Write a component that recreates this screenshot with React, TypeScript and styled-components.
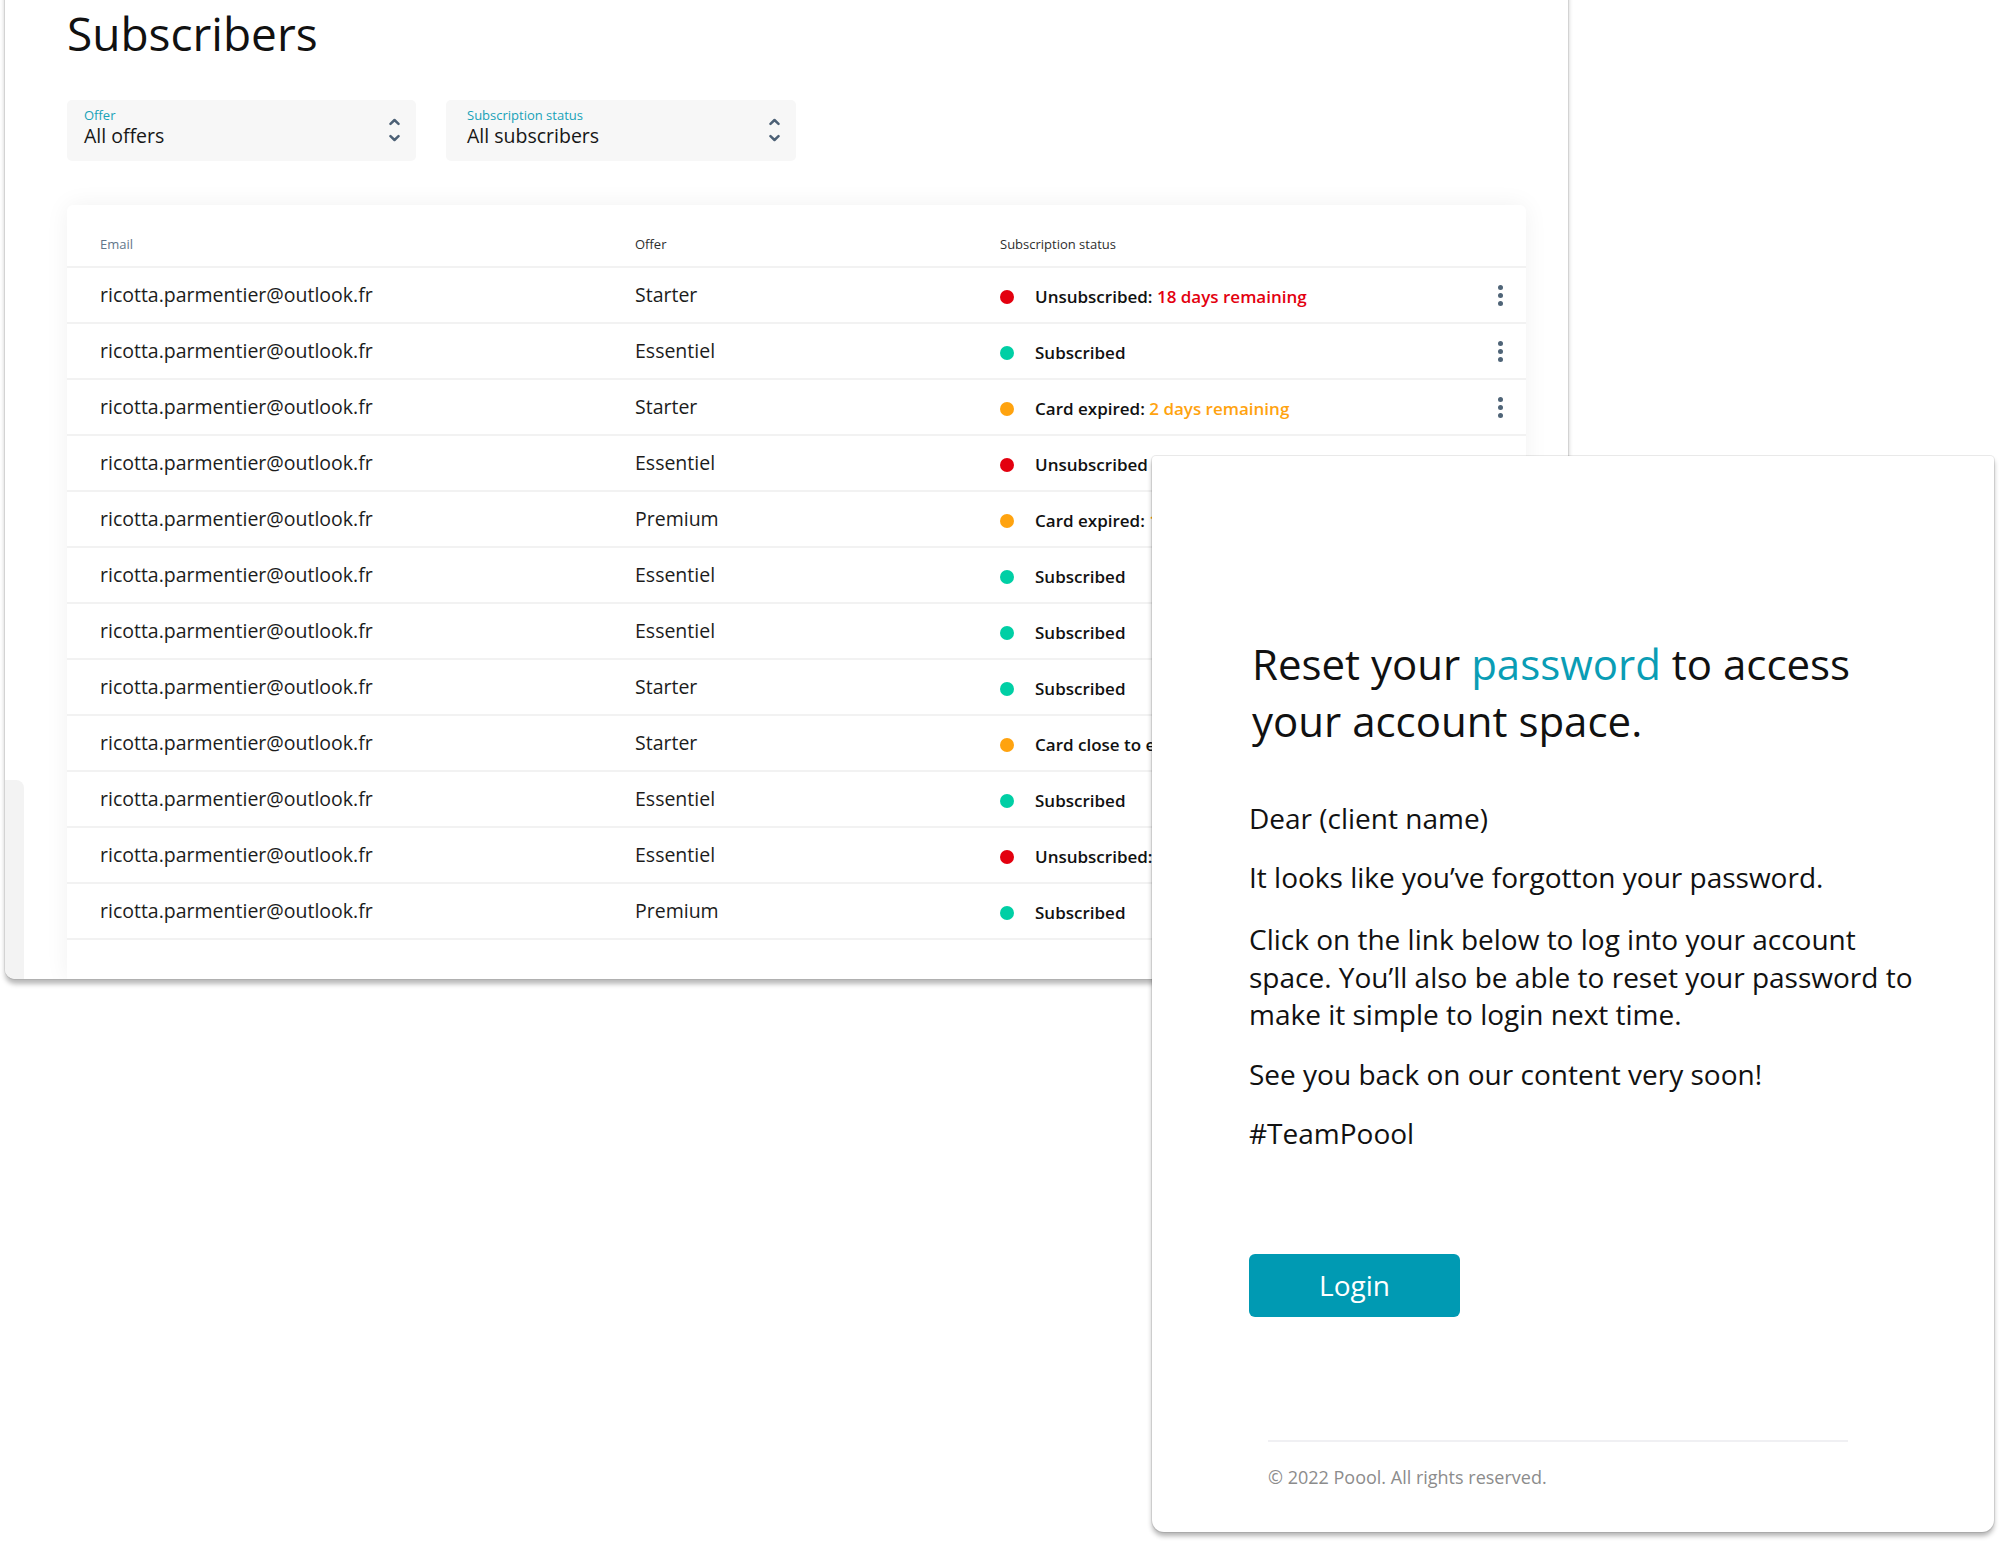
import React from 'react'
import styled, { createGlobalStyle } from 'styled-components'

type Tone = 'red' | 'green' | 'orange'

interface Subscriber {
  email: string
  offer: string
  tone: Tone
  status: string
  note?: string
  menu?: boolean
}

const tones: Record<Tone, string> = {
  red: '#e3000f',
  green: '#00cfa5',
  orange: '#ffa30f',
}

const email = 'ricotta.parmentier@outlook.fr'

const subscribers: Subscriber[] = [
  { email, offer: 'Starter', tone: 'red', status: 'Unsubscribed:', note: '18 days remaining', menu: true },
  { email, offer: 'Essentiel', tone: 'green', status: 'Subscribed', menu: true },
  { email, offer: 'Starter', tone: 'orange', status: 'Card expired:', note: '2 days remaining', menu: true },
  { email, offer: 'Essentiel', tone: 'red', status: 'Unsubscribed' },
  { email, offer: 'Premium', tone: 'orange', status: 'Card expired:', note: '12 days remaining' },
  { email, offer: 'Essentiel', tone: 'green', status: 'Subscribed' },
  { email, offer: 'Essentiel', tone: 'green', status: 'Subscribed' },
  { email, offer: 'Starter', tone: 'green', status: 'Subscribed' },
  { email, offer: 'Starter', tone: 'orange', status: 'Card close to expiring' },
  { email, offer: 'Essentiel', tone: 'green', status: 'Subscribed' },
  { email, offer: 'Essentiel', tone: 'red', status: 'Unsubscribed:', note: '5 days remaining' },
  { email, offer: 'Premium', tone: 'green', status: 'Subscribed' },
]

const Chevrons = () => (
  <ChevronIcon viewBox="0 0 11 24" width="11" height="24">
    <path d="M1.5 5.8 L5.5 2 L9.5 5.8" />
    <path d="M1.5 18.2 L5.5 22 L9.5 18.2" />
  </ChevronIcon>
)

const App: React.FC = () => (
  <>
    <GlobalStyle />
    <Page>
      <Dashboard>
        <SideRail />
        <Main>
          <Title>Subscribers</Title>
          <Filters>
            <Select $width={349} $inset={17}>
              <SelectText>
                <SelectLabel>Offer</SelectLabel>
                <SelectValue>All offers</SelectValue>
              </SelectText>
              <Chevrons />
            </Select>
            <Select $width={350} $inset={21}>
              <SelectText>
                <SelectLabel>Subscription status</SelectLabel>
                <SelectValue>All subscribers</SelectValue>
              </SelectText>
              <Chevrons />
            </Select>
          </Filters>
          <TableCard>
            <HeaderRow>
              <HeadCell $muted>Email</HeadCell>
              <HeadCell>Offer</HeadCell>
              <HeadCell>Subscription status</HeadCell>
              <span />
            </HeaderRow>
            {subscribers.map((s, i) => (
              <Row key={i}>
                <Cell>{s.email}</Cell>
                <Cell>{s.offer}</Cell>
                <StatusCell>
                  <Dot $color={tones[s.tone]} />
                  <StatusText>
                    {s.status}
                    {s.note && <Note $color={tones[s.tone]}> {s.note}</Note>}
                  </StatusText>
                </StatusCell>
                {s.menu ? (
                  <Kebab>
                    <i />
                    <i />
                    <i />
                  </Kebab>
                ) : (
                  <span />
                )}
              </Row>
            ))}
          </TableCard>
        </Main>
      </Dashboard>

      <MailCard>
        <MailTitle>
          Reset your <Accent>password</Accent> to access your account space.
        </MailTitle>
        <MailText>Dear (client name)</MailText>
        <MailText $after={24.5}>It looks like you’ve forgotton your password.</MailText>
        <MailText>
          Click on the link below to log into your account space. You’ll also be able to reset your
          password to make it simple to login next time.
        </MailText>
        <MailText>See you back on our content very soon!</MailText>
        <MailText>#TeamPoool</MailText>
        <LoginButton>Login</LoginButton>
        <MailFooter>© 2022 Poool. All rights reserved.</MailFooter>
      </MailCard>
    </Page>
  </>
)

export default App

const GlobalStyle = createGlobalStyle`
  html, body {
    margin: 0;
    padding: 0;
    background: #fff;
  }
  body {
    font-family: 'Open Sans', 'Noto Sans', sans-serif;
    color: #161616;
  }
  * {
    box-sizing: border-box;
  }
`

const Page = styled.div`
  position: relative;
  width: 2000px;
  height: 1543px;
  overflow: hidden;
  background: #fff;
`

const Dashboard = styled.section`
  display: flex;
  width: 1563px;
  height: 999px;
  margin: -20px 0 0 5px;
  background: #fff;
  border-radius: 0 0 10px 10px;
  box-shadow: 0 0 0 1px rgba(0, 0, 0, 0.06), 0 5px 5px rgba(0, 0, 0, 0.28);
  overflow: hidden;
`

const SideRail = styled.div`
  flex-shrink: 0;
  align-self: flex-end;
  width: 19px;
  height: 199px;
  background: #f3f3f3;
  border-top-right-radius: 8px;
`

const Main = styled.div`
  flex: 1;
  display: flex;
  flex-direction: column;
  padding: 25px 42px 0 43px;
`

const Title = styled.h1`
  margin: 0;
  font-size: 46px;
  line-height: 57px;
  font-weight: 400;
  color: #111;
`

const Filters = styled.div`
  display: flex;
  gap: 30px;
  margin-top: 38px;
`

const Select = styled.div<{ $width: number; $inset: number }>`
  display: flex;
  align-items: flex-start;
  justify-content: space-between;
  width: ${(p) => p.$width}px;
  height: 61px;
  padding: 8px 16px 0 ${(p) => p.$inset}px;
  background: #f7f7f7;
  border-radius: 5px;
`

const SelectText = styled.div`
  display: flex;
  flex-direction: column;
`

const SelectLabel = styled.span`
  font-size: 13px;
  line-height: 14px;
  color: #17a2b8;
`

const SelectValue = styled.span`
  margin-top: 3px;
  font-size: 19.5px;
  line-height: 22px;
  color: #161616;
`

const ChevronIcon = styled.svg`
  margin-top: 10px;
  fill: none;
  stroke: #4c6075;
  stroke-width: 2.5;
  stroke-linecap: round;
  stroke-linejoin: round;
`

const TableCard = styled.div`
  flex: 1;
  margin-top: 44px;
  background: #fff;
  border-radius: 6px 6px 0 0;
  box-shadow: 0 0 24px rgba(0, 0, 0, 0.06);
`

const grid = `
  display: grid;
  grid-template-columns: 535px 365px 490px 20px;
  padding: 0 16px 0 33px;
  border-bottom: 2px solid #f2f2f2;
`

const HeaderRow = styled.div`
  ${grid}
  height: 63px;
  padding-top: 30px;
`

const HeadCell = styled.span<{ $muted?: boolean }>`
  font-size: 13px;
  line-height: 18px;
  color: ${(p) => (p.$muted ? '#62768a' : '#2e2e2e')};
`

const Row = styled.div`
  ${grid}
  height: 56px;
  align-items: center;
`

const Cell = styled.span`
  font-size: 19.5px;
  line-height: 24px;
  color: #1c1c1c;
`

const StatusCell = styled.div`
  display: flex;
  align-items: center;
  gap: 21px;
  padding-top: 4px;
`

const Dot = styled.span<{ $color: string }>`
  flex-shrink: 0;
  width: 14px;
  height: 14px;
  border-radius: 50%;
  background: ${(p) => p.$color};
`

const StatusText = styled.span`
  font-size: 17px;
  line-height: 22px;
  font-weight: 600;
  color: #111;
  white-space: nowrap;
`

const Note = styled.span<{ $color: string }>`
  color: ${(p) => p.$color};
`

const Kebab = styled.div`
  display: flex;
  flex-direction: column;
  align-items: center;
  gap: 3px;

  i {
    display: block;
    width: 5px;
    height: 5px;
    border-radius: 50%;
    background: #4f6477;
  }
`

const MailCard = styled.article`
  position: absolute;
  left: 1152px;
  top: 456px;
  width: 842px;
  height: 1076px;
  display: flex;
  flex-direction: column;
  padding: 179px 0 0 97px;
  background: #fff;
  border-radius: 4px 4px 12px 12px;
  box-shadow: 0 0 0 1px rgba(0, 0, 0, 0.08), 0 4px 5px rgba(0, 0, 0, 0.3);
`

const MailTitle = styled.h2`
  max-width: 640px;
  margin: 0 0 50.5px 3px;
  font-size: 42px;
  line-height: 57px;
  font-weight: 400;
  color: #111;
`

const Accent = styled.span`
  color: #0a9db5;
`

const MailText = styled.p<{ $after?: number }>`
  max-width: 680px;
  margin: 0 0 ${(p) => p.$after ?? 22}px;
  font-size: 28px;
  line-height: 37.5px;
  color: #111;
`

const LoginButton = styled.button`
  align-self: flex-start;
  width: 211px;
  height: 63px;
  margin-top: 79px;
  border: 0 none;
  border-radius: 6px;
  background: #009ab3;
  color: #fff;
  font: inherit;
  font-size: 28px;
  cursor: pointer;
`

const MailFooter = styled.footer`
  width: 580px;
  margin: 123px 0 0 19px;
  padding-top: 22px;
  border-top: 2px solid #f0f0f3;
  font-size: 18px;
  line-height: 26px;
  color: #8c8c8c;
`
